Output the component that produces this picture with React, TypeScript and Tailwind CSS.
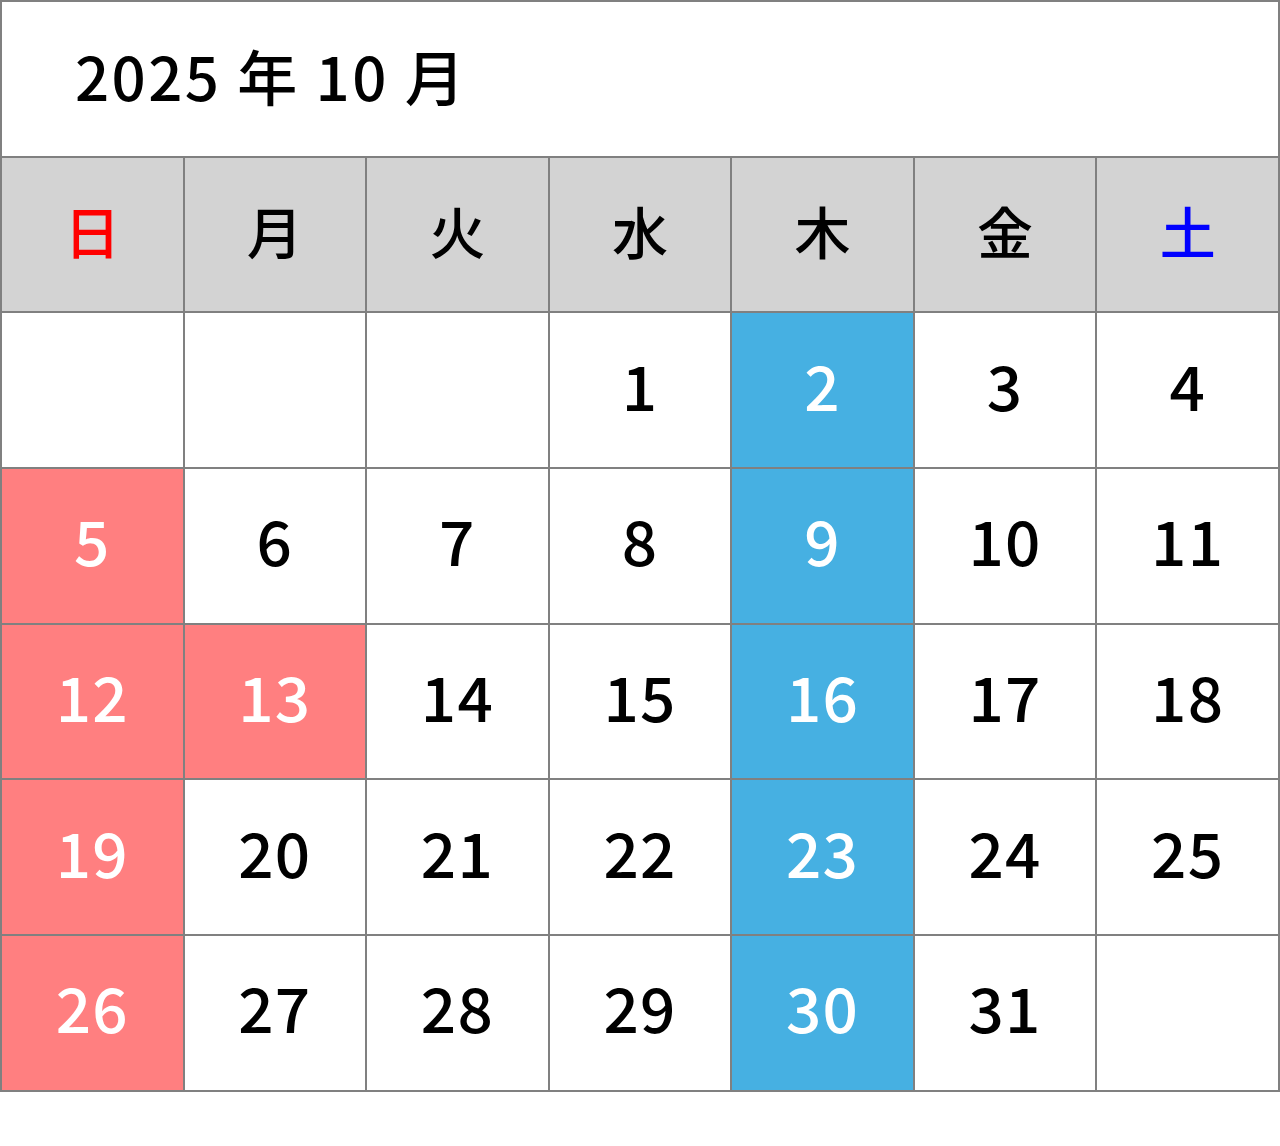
const weekdays = [
  { label: "日", color: "text-[#ff0000]" },
  { label: "月", color: "text-black" },
  { label: "火", color: "text-black" },
  { label: "水", color: "text-black" },
  { label: "木", color: "text-black" },
  { label: "金", color: "text-black" },
  { label: "土", color: "text-[#0000ff]" },
]

// October 2025 starts on a Wednesday
const weeks: (number | null)[][] = [
  [null, null, null, 1, 2, 3, 4],
  [5, 6, 7, 8, 9, 10, 11],
  [12, 13, 14, 15, 16, 17, 18],
  [19, 20, 21, 22, 23, 24, 25],
  [26, 27, 28, 29, 30, 31, null],
]

const closed = [5, 12, 13, 19, 26]

function cellStyle(day: number | null, col: number) {
  if (day === null) return "bg-white"
  if (closed.includes(day)) return "bg-[#ff7f80] text-white"
  if (col === 4) return "bg-[#46b0e2] text-white"
  return "bg-white text-black"
}

export default function App() {
  return (
    <div className="w-[1280px] bg-white" style={{ fontFamily: '"Noto Sans CJK JP", "Noto Sans", sans-serif' }}>
      <table className="w-[1280px] h-[1090px] border-collapse table-fixed">
        <tbody>
          <tr className="h-[155.7px]">
            <td colSpan={7} className="border-2 border-[#808080] pl-[73px] pb-[8px] text-[60px] font-medium tracking-[0.04em] text-black leading-none">
              2025 年 10 月
            </td>
          </tr>
          <tr className="h-[155.7px]">
            {weekdays.map((w) => (
              <td
                key={w.label}
                className={`border-2 border-[#808080] bg-[#d3d3d3] pb-[9px] text-center text-[56px] font-medium leading-none ${w.color}`}
              >
                {w.label}
              </td>
            ))}
          </tr>
          {weeks.map((week, i) => (
            <tr key={i} className="h-[155.7px]">
              {week.map((day, col) => (
                <td
                  key={col}
                  className={`border-2 border-[#808080] pb-[13px] text-center text-[62px] font-medium tracking-[0.02em] leading-none ${cellStyle(day, col)}`}
                >
                  {day ?? ""}
                </td>
              ))}
            </tr>
          ))}
        </tbody>
      </table>
    </div>
  )
}
